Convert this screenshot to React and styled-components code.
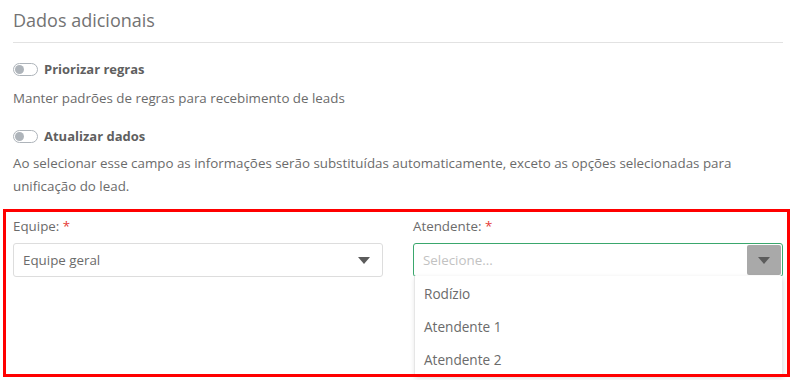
import React from "react";
import styled, { createGlobalStyle } from "styled-components";

const GlobalStyle = createGlobalStyle`
  html, body { margin: 0; padding: 0; background: #fff; }
  body { font-family: "Open Sans", "Noto Sans", sans-serif; color: #6b6b6b; }
  * { box-sizing: border-box; }
`;

const Page = styled.div`
  width: 796px;
  height: 380px;
  padding: 0 13px;
  overflow: hidden;
`;

const Header = styled.h2`
  margin: 0;
  padding: 8px 0 10px;
  font-size: 18px;
  line-height: 24px;
  font-weight: 400;
  color: #737373;
  border-bottom: 1px solid #e2e2e2;
`;

const ToggleRow = styled.label`
  display: flex;
  align-items: center;
  gap: 6px;
  height: 20px;
  margin-top: ${(p) => p.$mt}px;
  font-size: 13px;
  font-weight: 700;
  color: #5f5f5f;
`;

const Track = styled.span`
  position: relative;
  display: inline-block;
  width: 25px;
  height: 13px;
  border: 1px solid #aeb4ba;
  border-radius: 7px;
  background: #fff;
  &::before {
    content: "";
    position: absolute;
    left: 1px;
    top: 1px;
    width: 9px;
    height: 9px;
    border-radius: 50%;
    background: #aeb4ba;
  }
`;

const Text = styled.p`
  margin: ${(p) => p.$mt}px 0 0;
  font-size: 13.35px;
  line-height: 23px;
  color: #6b6b6b;
`;

const Fields = styled.div`
  position: relative;
  margin: 11px -7px 0 -10px;
  padding: 7px 7px 0 10px;
  height: 168px;
  display: grid;
  grid-template-columns: 1fr 1fr;
  column-gap: 30px;
  align-content: start;
  &::after {
    content: "";
    position: absolute;
    inset: 0;
    border: 3px solid #ff0000;
    z-index: 5;
    pointer-events: none;
  }
`;

const Field = styled.div`
  position: relative;
`;

const Label = styled.div`
  font-size: 13.35px;
  line-height: 20px;
  color: #6b6b6b;
  margin-bottom: 7px;
`;

const Star = styled.span`
  color: #e53935;
`;

const Select = styled.div`
  position: relative;
  display: flex;
  align-items: center;
  height: 34px;
  padding-left: 9px;
  border: 1px solid ${(p) => (p.$focused ? "#3aa76d" : "#dddddd")};
  border-radius: 3px;
  font-size: 13.35px;
  color: ${(p) => (p.$placeholder ? "#c2c2c2" : "#6b6b6b")};
  background: #fff;
`;

const Value = styled.span`
  flex: 1;
`;

const ArrowBox = styled.span`
  display: flex;
  align-items: center;
  justify-content: center;
  align-self: stretch;
  width: 34px;
  margin: 1px;
  background: ${(p) => (p.$active ? "#a9a9a9" : "transparent")};
  border-radius: 2px;
`;

const Caret = () => (
  <svg width="12" height="7" viewBox="0 0 12 7">
    <path d="M0 0 H12 L6 7 Z" fill="#5c5c5c" />
  </svg>
);

const Menu = styled.ul`
  position: absolute;
  top: 100%;
  left: 0;
  right: 0;
  margin: 0;
  padding: 1px 0 0;
  list-style: none;
  background: #fff;
  border-left: 1px solid #e6e6e6;
  box-shadow: 1px 2px 5px rgba(0, 0, 0, 0.15);
  z-index: 3;
`;

const Item = styled.li`
  height: 33px;
  line-height: 33px;
  padding-left: 9px;
  font-size: 13.6px;
  color: #6b6b6b;
`;

export default function App() {
  return (
    <>
      <GlobalStyle />
      <Page>
        <Header>Dados adicionais</Header>
        <ToggleRow $mt={16}>
          <Track />
          Priorizar regras
        </ToggleRow>
        <Text $mt={8}>Manter padrões de regras para recebimento de leads</Text>
        <ToggleRow $mt={16}>
          <Track />
          Atualizar dados
        </ToggleRow>
        <Text $mt={6}>
          Ao selecionar esse campo as informações serão substituídas automaticamente, exceto as opções selecionadas para
          unificação do lead.
        </Text>
        <Fields>
          <Field>
            <Label>
              Equipe: <Star>*</Star>
            </Label>
            <Select>
              <Value>Equipe geral</Value>
              <ArrowBox>
                <Caret />
              </ArrowBox>
            </Select>
          </Field>
          <Field>
            <Label>
              Atendente: <Star>*</Star>
            </Label>
            <Select $focused $placeholder>
              <Value>Selecione...</Value>
              <ArrowBox $active>
                <Caret />
              </ArrowBox>
              <Menu>
                <Item>Rodízio</Item>
                <Item>Atendente 1</Item>
                <Item>Atendente 2</Item>
              </Menu>
            </Select>
          </Field>
        </Fields>
      </Page>
    </>
  );
}
